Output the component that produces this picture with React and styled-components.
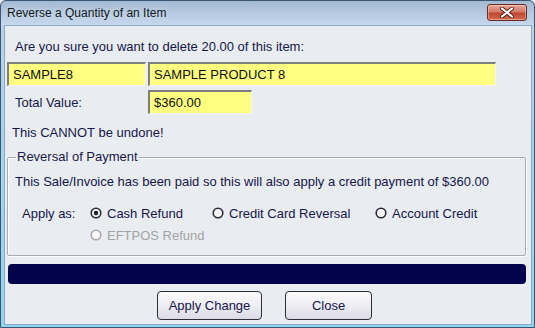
import React from 'react';
import styled, { createGlobalStyle } from 'styled-components';

const Global = createGlobalStyle`
  html, body { margin: 0; padding: 0; background: #E9EDF1; }
  body { font-family: "Liberation Sans", Arial, sans-serif; }
  * { box-sizing: border-box; }
`;

const Window = styled.div`
  width: 535px;
  height: 328px;
  display: flex;
  flex-direction: column;
  border: 1px solid #3A5673;
  border-radius: 6px 6px 0 0;
  overflow: hidden;
  background: linear-gradient(to bottom, #A4BAD3 0px, #C6D8EC 24px, #B9D3EA 25px, #8ED6EF 100%);
`;

const TitleBar = styled.div`
  height: 24px;
  flex: none;
  display: flex;
  align-items: center;
  justify-content: space-between;
  padding: 0 7px 0 6px;
`;

const Title = styled.span`
  font-size: 12px;
  color: #101820;
  text-shadow: 0 0 6px rgba(255,255,255,0.6);
`;

const CloseButton = styled.div`
  width: 40px;
  height: 17px;
  margin-top: -1px;
  border: 1px solid #6A2A22;
  border-radius: 3px;
  background: linear-gradient(to bottom, #E8A598 0%, #D47A68 45%, #C0462F 55%, #D16A52 100%);
  display: flex;
  align-items: center;
  justify-content: center;
  box-shadow: inset 0 0 0 1px rgba(255,255,255,0.35);
`;

const Client = styled.div`
  flex: 1;
  margin: 0 2px 2px 3px;
  background: #E9EDF1;
  border: 1px solid #8EA8C2;
  display: flex;
  flex-direction: column;
  color: #16164A;
  font-size: 13px;
`;

const TextLine = styled.div`
  height: 16px;
  line-height: 16px;
  margin-top: ${p => p.$top}px;
  padding-left: ${p => p.$left}px;
  color: ${p => p.$color || 'inherit'};
  white-space: nowrap;
`;

const FieldRow = styled.div`
  display: flex;
  align-items: center;
  gap: ${p => p.$gap || 0}px;
  margin-top: ${p => p.$top}px;
  padding-left: ${p => p.$left || 0}px;
  height: 24px;
`;

const Field = styled.div`
  width: ${p => p.$w}px;
  height: 24px;
  background: #FFFF80;
  border-top: 2px solid #7E7E7E;
  border-left: 2px solid #7E7E7E;
  border-right: 1px solid #F4F4F4;
  border-bottom: 1px solid #F4F4F4;
  padding-left: 4px;
  line-height: 21px;
  color: #101010;
  white-space: nowrap;
  overflow: hidden;
`;

const Label = styled.div`
  width: ${p => p.$w}px;
  padding-left: ${p => p.$left || 0}px;
  white-space: nowrap;
`;

const Group = styled.fieldset`
  margin: 8px 0 0 2px;
  width: 519px;
  height: 107px;
  padding: 0;
  border: 1px solid #A5ACB4;
  box-shadow: inset 1px 1px 0 #FFFFFF, 1px 1px 0 #FFFFFF;
  border-radius: 2px;
`;

const Legend = styled.legend`
  margin-left: 8px;
  padding: 0 1px;
  line-height: 16px;
  color: #16164A;
`;

const OptionsGrid = styled.div`
  display: grid;
  grid-template-columns: 82px 122px 163px auto;
  row-gap: 6px;
  margin-top: 15px;
  align-items: center;
`;

const RadioItem = styled.div`
  display: flex;
  align-items: center;
  gap: 5px;
  height: 16px;
  white-space: nowrap;
  color: ${p => (p.$disabled ? '#A3A3A3' : 'inherit')};
  grid-column: ${p => p.$col || 'auto'};
`;

const Progress = styled.div`
  margin: 8px 0 0 3px;
  width: 518px;
  height: 20px;
  border-radius: 4px;
  background: #03034B;
`;

const ButtonRow = styled.div`
  display: flex;
  gap: 23px;
  margin-top: 7px;
  padding-left: 152px;
`;

const Button = styled.div`
  width: ${p => p.$w}px;
  height: 29px;
  border: 1px solid #2E2E3A;
  border-radius: 4px;
  background: linear-gradient(to bottom, #FBFBFD 0%, #EDEDF3 50%, #DCDBE6 100%);
  display: flex;
  align-items: center;
  justify-content: center;
  color: #16164A;
  font-size: 13px;
`;

function Radio({ checked, disabled }) {
  const stroke = disabled ? '#A8A8A8' : '#2A2A3A';
  return (
    <svg width="12" height="12" viewBox="0 0 12 12">
      <circle cx="6" cy="6" r="4.8" fill="#F8F8F8" stroke={stroke} strokeWidth="1.6" />
      {checked && <circle cx="6" cy="6" r="2.2" fill="#202030" />}
    </svg>
  );
}

function CloseGlyph() {
  return (
    <svg width="14" height="11" viewBox="0 0 14 11">
      <path d="M2 1.5 L12 9.5 M12 1.5 L2 9.5" stroke="#5A2018" strokeWidth="4" strokeLinecap="round" />
      <path d="M2 1.5 L12 9.5 M12 1.5 L2 9.5" stroke="#FFFFFF" strokeWidth="2.2" strokeLinecap="round" />
    </svg>
  );
}

export default function App() {
  return (
    <>
      <Global />
      <Window>
        <TitleBar>
          <Title>Reverse a Quantity of an Item</Title>
          <CloseButton><CloseGlyph /></CloseButton>
        </TitleBar>
        <Client>
          <TextLine $top={13} $left={10}>Are you sure you want to delete 20.00 of this item:</TextLine>
          <FieldRow $top={7} $left={2} $gap={2}>
            <Field $w={139}>SAMPLE8</Field>
            <Field $w={348}>SAMPLE PRODUCT 8</Field>
          </FieldRow>
          <FieldRow $top={4}>
            <Label $w={143} $left={10}>Total Value:</Label>
            <Field $w={104}>$360.00</Field>
          </FieldRow>
          <TextLine $top={11} $left={7}>This CANNOT be undone!</TextLine>
          <Group>
            <Legend>Reversal of Payment</Legend>
            <TextLine $top={9} $left={7}>This Sale/Invoice has been paid so this will also apply a credit payment of $360.00</TextLine>
            <OptionsGrid>
              <Label $left={14}>Apply as:</Label>
              <RadioItem><Radio checked />Cash Refund</RadioItem>
              <RadioItem><Radio />Credit Card Reversal</RadioItem>
              <RadioItem><Radio />Account Credit</RadioItem>
              <RadioItem $col="2" $disabled><Radio disabled />EFTPOS Refund</RadioItem>
            </OptionsGrid>
          </Group>
          <Progress />
          <ButtonRow>
            <Button $w={105}>Apply Change</Button>
            <Button $w={87}>Close</Button>
          </ButtonRow>
        </Client>
      </Window>
    </>
  );
}
